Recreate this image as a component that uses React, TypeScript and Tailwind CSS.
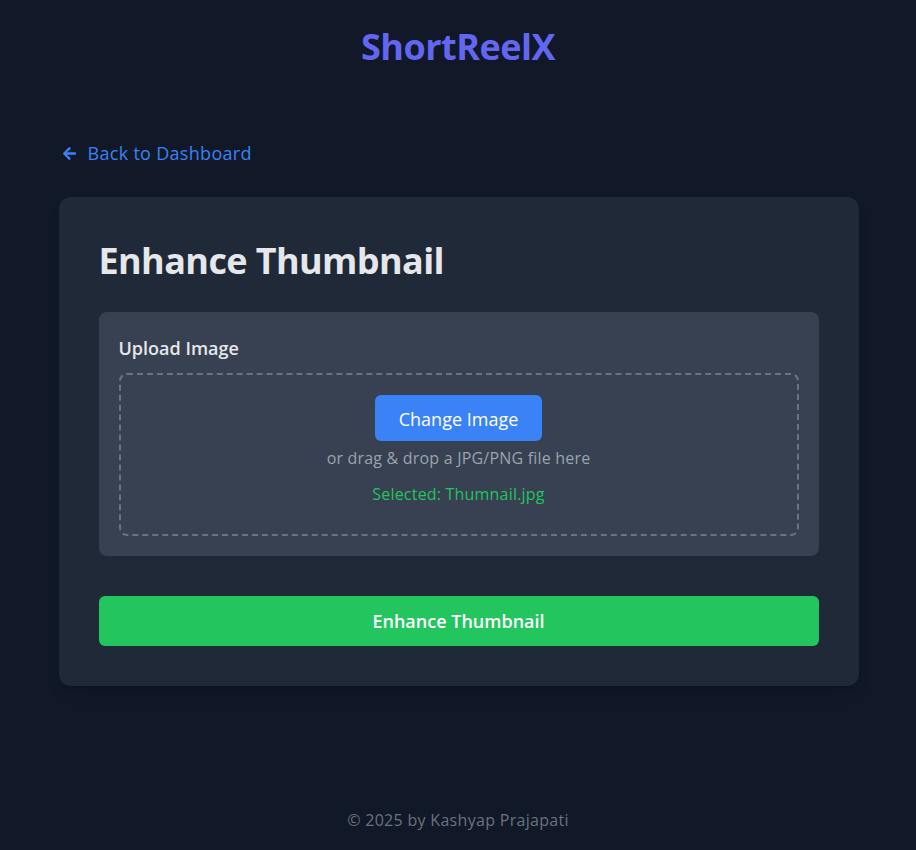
import React from "react";
import { FaArrowLeft } from "react-icons/fa";

export default function App() {
  return (
    <div
      className="min-h-screen bg-[#111827] flex flex-col text-gray-200"
      style={{ fontFamily: '"Open Sans", "Noto Sans", sans-serif' }}
    >
      <header className="h-[94px] flex items-center justify-center">
        <h1 className="text-4xl font-bold text-[#6366f1] tracking-[-0.5px]">ShortReelX</h1>
      </header>
      <main className="flex-1 w-full max-w-[801px] mx-auto pt-[45px] pl-px">
        <a className="flex items-center gap-[11px] text-lg leading-7 text-[#3b82f6] w-fit pl-[3px] mb-[30px] cursor-pointer">
          <FaArrowLeft className="w-[15px] h-[15px]" />
          <span className="tracking-[0.3px]">Back to Dashboard</span>
        </a>
        <div className="bg-[#1f2937] rounded-xl p-10 shadow-lg">
          <h2 className="text-4xl leading-10 font-bold text-[#e5e7eb] mt-[4px] mb-[31px] tracking-[-0.6px]">Enhance Thumbnail</h2>
          <div className="bg-[#374151] rounded-lg px-5 pt-[22px] pb-5">
            <label className="block text-lg leading-7 font-semibold text-[#e5e7eb] mb-[11px]">Upload Image</label>
            <div className="border-2 border-dashed border-[#6b7280] rounded-lg pt-5 pb-7 flex flex-col items-center">
              <button className="bg-[#3b82f6] text-white text-lg leading-7 px-6 pt-[10px] pb-[8px] rounded-md">
                Change Image
              </button>
              <p className="mt-[5px] text-base leading-6 text-[#9ca3af] tracking-[0.2px]">or drag &amp; drop a JPG/PNG file here</p>
              <p className="mt-3 text-base leading-6 text-[#22c55e] tracking-[0.2px]">Selected: Thumnail.jpg</p>
            </div>
          </div>
          <button className="mt-10 w-full bg-[#22c55e] text-white text-lg leading-7 font-semibold py-[11px] rounded-md">
            Enhance Thumbnail
          </button>
        </div>
      </main>
      <footer className="pb-[18px] pt-4 text-center text-base leading-6 text-[#6b7280] tracking-[0.3px]">
        © 2025 by Kashyap Prajapati
      </footer>
    </div>
  );
}
